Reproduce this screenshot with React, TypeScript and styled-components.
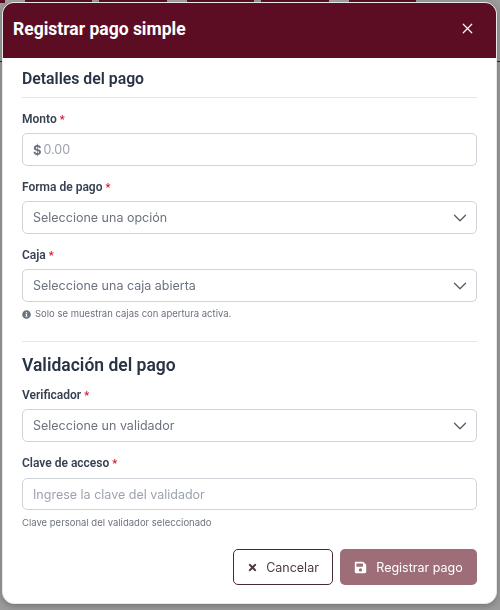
import React from "react";
import styled, { createGlobalStyle } from "styled-components";
import { X, ChevronDown } from "lucide-react";
import { FaSave, FaTimes, FaInfoCircle } from "react-icons/fa";

const GlobalStyle = createGlobalStyle`
  html, body {
    margin: 0;
    padding: 0;
    height: 100%;
    overflow: hidden;
    background: #9b9b9b;
  }
  * {
    box-sizing: border-box;
  }
`;

const fields = {
  headingFont: `"Roboto", "Liberation Sans", sans-serif`,
  bodyFont: `"Inter", "Liberation Sans", sans-serif`,
};

const Chevron = () => <ChevronDown size={22} strokeWidth={1.4} color="#555c66" />;

const App: React.FC = () => {
  return (
    <>
      <GlobalStyle />
      <Backdrop>
        <BackStrip>
          <BackTile $first>
            <BackMark />
          </BackTile>
          <BackTile>
            <BackMark />
          </BackTile>
          <BackTile>
            <BackMark />
          </BackTile>
        </BackStrip>
        <BackRule />
      </Backdrop>

      <Overlay>
        <Modal>
          <Header>
            <Title>Registrar pago simple</Title>
            <CloseButton>
              <X size={17} strokeWidth={1.7} />
            </CloseButton>
          </Header>

          <Body>
            {/* Detalles */}
            <SectionTitle>Detalles del pago</SectionTitle>

            <Field>
              <Label>
                Monto <Req>*</Req>
              </Label>
              <InputBox>
                <Dollar>$</Dollar>
                <Amount>0.00</Amount>
              </InputBox>
            </Field>

            <Field>
              <Label>
                Forma de pago <Req>*</Req>
              </Label>
              <SelectBox>
                <span>Seleccione una opción</span>
                <Chevron />
              </SelectBox>
            </Field>

            <Field>
              <Label>
                Caja <Req>*</Req>
              </Label>
              <SelectBox>
                <span>Seleccione una caja abierta</span>
                <Chevron />
              </SelectBox>
              <Hint>
                <FaInfoCircle size={9} color="#6b7280" />
                Solo se muestran cajas con apertura activa.
              </Hint>
            </Field>

            <Divider />

            {/* Validacion */}
            <BigTitle>Validación del pago</BigTitle>

            <Field>
              <Label>
                Verificador <Req>*</Req>
              </Label>
              <SelectBox>
                <span>Seleccione un validador</span>
                <Chevron />
              </SelectBox>
            </Field>

            <Field>
              <KeyLabel>
                Clave de acceso <Req>*</Req>
              </KeyLabel>
              <TextBox>Ingrese la clave del validador</TextBox>
              <KeyHint>Clave personal del validador seleccionado</KeyHint>
            </Field>

            <Footer>
              <CancelButton>
                <FaTimes size={11} />
                Cancelar
              </CancelButton>
              <SaveButton>
                <FaSave size={13} />
                Registrar pago
              </SaveButton>
            </Footer>
          </Body>
        </Modal>
      </Overlay>
    </>
  );
};

const Backdrop = styled.div`
  height: 610px;
  overflow: hidden;
  background: #9b9b9b;
`;

const BackStrip = styled.div`
  display: flex;
  gap: 7px;
  height: 3px;
`;

const BackTile = styled.div<{ $first?: boolean }>`
  display: flex;
  justify-content: center;
  flex: 0 0 155px;
  margin-left: ${(p) => (p.$first ? "-63px" : "0")};
  background: #5c0d24;
`;

const BackMark = styled.div`
  width: 20px;
  height: 3px;
  background: #a8a0a2;
`;

const BackRule = styled.div`
  height: 1px;
  margin-top: 58px;
  background: #5c0d24;
`;

const Overlay = styled.div`
  position: fixed;
  inset: 0;
  padding: 2px 3px 6px 2px;
`;

const Modal = styled.div`
  height: 602px;
  background: #fff;
  border: 1px solid #e9e9e9;
  border-radius: 12px;
  overflow: hidden;
  box-shadow: 0 2px 6px rgba(0, 0, 0, 0.25);
`;

const Header = styled.div`
  display: flex;
  align-items: center;
  justify-content: space-between;
  height: 55px;
  padding: 0 20px 4px 10px;
  background: #5c0d24;
`;

const Title = styled.h1`
  margin: 0;
  font-family: ${fields.headingFont};
  font-size: 17.5px;
  font-weight: 700;
  color: #fff;
`;

const CloseButton = styled.div`
  display: flex;
  color: #fff;
`;

const Body = styled.div`
  padding: 12px 19px 0;
`;

const SectionTitle = styled.h2`
  margin: 0 0 14px;
  padding-bottom: 9px;
  border-bottom: 1px solid #e3e5e8;
  font-family: ${fields.headingFont};
  font-size: 15.8px;
  line-height: 18px;
  font-weight: 600;
  color: #283345;
`;

const BigTitle = styled.h2`
  margin: 0 0 13px;
  font-family: ${fields.headingFont};
  font-size: 17.5px;
  line-height: 20px;
  font-weight: 600;
  color: #283345;
`;

const Field = styled.div`
  margin-bottom: 14px;
`;

const Label = styled.div`
  margin-bottom: 7px;
  font-family: ${fields.headingFont};
  font-size: 12px;
  line-height: 14px;
  font-weight: 600;
  color: #374151;
`;

const KeyLabel = styled(Label)`
  margin-bottom: 8px;
`;

const Req = styled.span`
  color: #e0102a;
  font-size: 11px;
  line-height: 1;
`;

const InputBox = styled.div`
  display: flex;
  align-items: center;
  gap: 2px;
  height: 33px;
  padding: 0 10px;
  border: 1px solid #ced4da;
  border-radius: 5px;
  font-family: ${fields.bodyFont};
  font-size: 12.5px;
`;

const Dollar = styled.span`
  font-weight: 700;
  font-size: 13px;
  color: #6b7280;
`;

const Amount = styled.span`
  color: #9ca3af;
`;

const SelectBox = styled.div`
  display: flex;
  align-items: center;
  justify-content: space-between;
  height: 33px;
  padding: 0 5px 0 10px;
  border: 1px solid #ced4da;
  border-radius: 5px;
  font-family: ${fields.bodyFont};
  font-size: 12.5px;
  color: #6b7280;
`;

const TextBox = styled(SelectBox)`
  height: 32px;
  color: #9ca3af;
`;

const Hint = styled.div`
  display: flex;
  align-items: center;
  gap: 4px;
  margin-top: 6px;
  font-family: ${fields.bodyFont};
  font-size: 9.5px;
  line-height: 12px;
  color: #6b7280;
`;

const KeyHint = styled(Hint)`
  margin-top: 7px;
`;

const Divider = styled.div`
  height: 1px;
  margin: 21px 0 13px;
  background: #e3e5e8;
`;

const Footer = styled.div`
  display: flex;
  justify-content: flex-end;
  gap: 7px;
  margin-top: 20px;
`;

const CancelButton = styled.div`
  display: flex;
  align-items: center;
  justify-content: center;
  gap: 8px;
  width: 100px;
  height: 36px;
  border: 1px solid #4a2a30;
  border-radius: 5px;
  font-family: ${fields.bodyFont};
  font-size: 12.5px;
  color: #4a3a3e;
`;

const SaveButton = styled.div`
  display: flex;
  align-items: center;
  justify-content: center;
  gap: 9px;
  width: 137px;
  height: 36px;
  border-radius: 5px;
  background: #9e6e78;
  font-family: ${fields.bodyFont};
  font-size: 12.5px;
  color: #fff;
`;

export default App;
